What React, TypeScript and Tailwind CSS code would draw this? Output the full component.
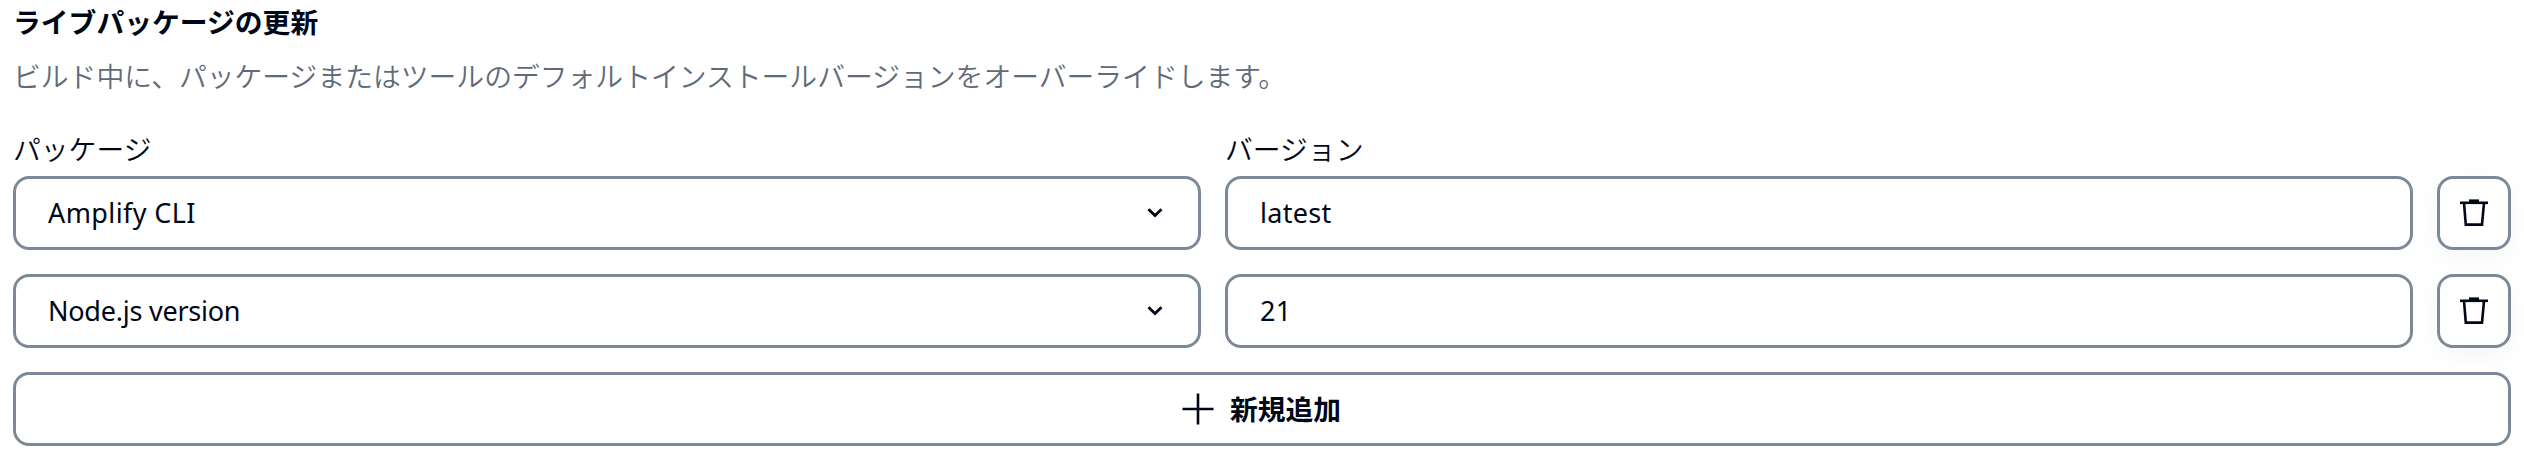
import React from "react";

const sans = "font-['Noto_Sans','Noto_Sans_CJK_JP',sans-serif]";
const jp = "font-['Noto_Sans_CJK_JP',sans-serif]";
const box = "h-[74px] rounded-[16px] border-[3px] border-[#7d8998] bg-white";
const columns = "grid grid-cols-[1fr_1fr_74px] gap-x-6";

function Chevron() {
  return (
    <svg width="16" height="12" viewBox="0 0 16 12" fill="none" stroke="#000716" strokeWidth="2.8">
      <path d="M1.500 2.300 8 8.600l6.500-6.300" />
    </svg>
  );
}

function Trash() {
  return (
    <svg width="28" height="28" viewBox="0 0 28 28" fill="none" stroke="#000716" strokeWidth="2.6">
      <path d="M0 3.800h28" />
      <path d="M9 2h10" strokeWidth="3.200" />
      <path d="M4 3.800 5.800 25.600H22L24 3.800" />
    </svg>
  );
}

function Row({ name, version, tracking }: { name: string; version: string; tracking: string }) {
  return (
    <div className={columns}>
      <button className={`${box} ${sans} flex items-center justify-between pl-8 pr-[35px] text-[27px]`}>
        <span className={tracking}>{name}</span>
        <Chevron />
      </button>
      <input
        className={`${box} ${sans} min-w-0 px-8 pb-0.5 text-[27px] tracking-[0.3px] outline-none`}
        defaultValue={version}
        aria-label="バージョン"
      />
      <button className={`${box} flex items-center justify-center shadow-[0_8px_24px_rgba(0,7,22,0.04)]`} aria-label="削除">
        <Trash />
      </button>
    </div>
  );
}

export default function App() {
  return (
    <main className={`${jp} h-[464px] w-[2524px] overflow-hidden bg-white px-[13px] text-[27.8px] text-[#000716]`} lang="ja">
      <h2 className="h-[46px] font-bold leading-[43px]">ライブパッケージの更新</h2>
      <p className="mt-[7px] h-[46px] font-[350] leading-[44px] text-[#5f6b7a]">
        ビルド中に、パッケージまたはツールのデフォルトインストールバージョンをオーバーライドします。
      </p>
      <div className={`${columns} mt-[27px] h-[50px] font-[350] leading-[45px]`}>
        <span>パッケージ</span>
        <span>バージョン</span>
      </div>
      <div className="flex flex-col gap-6">
        <Row name="Amplify CLI" version="latest" tracking="tracking-[0.4px]" />
        <Row name="Node.js version" version="21" tracking="tracking-[-0.24px]" />
        <button className={`${box} flex items-center justify-center gap-4 pr-px font-bold`}>
          <svg width="32" height="32" viewBox="0 0 32 32" stroke="#000716" strokeWidth="2.600">
            <path d="M16 .5v31M.5 16h31" />
          </svg>
          <span className="-mt-px">新規追加</span>
        </button>
      </div>
    </main>
  );
}
